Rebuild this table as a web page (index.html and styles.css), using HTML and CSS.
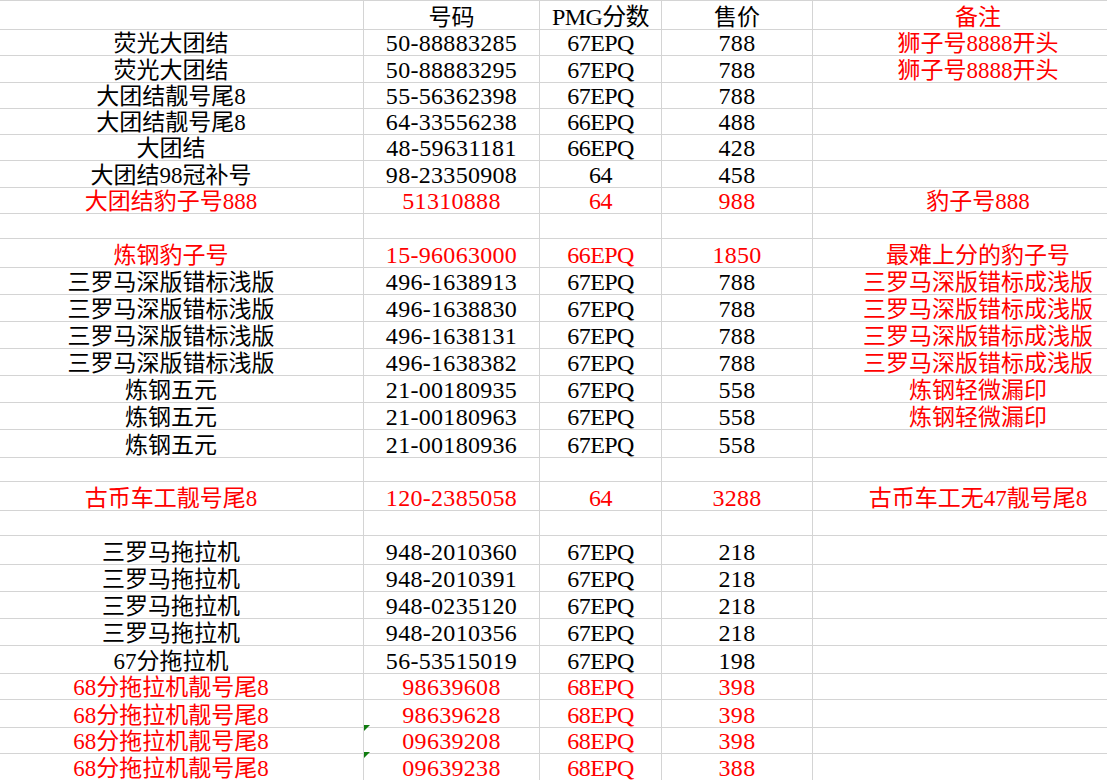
FILE: index.html
```html
<!DOCTYPE html>
<html lang="zh-CN">
<head>
<meta charset="utf-8">
<title>纸币报价表</title>
<link rel="stylesheet" href="styles.css">
</head>
<body>
<div class="sheet">
  <div class="row h26"><div class="cell c1"></div><div class="cell c2">号码</div><div class="cell c3 num">PMG分数</div><div class="cell c4">售价</div><div class="cell c5 red">备注</div></div>
  <div class="row"><div class="cell c1">荧光大团结</div><div class="cell c2 num">50-88883285</div><div class="cell c3 num">67EPQ</div><div class="cell c4 num">788</div><div class="cell c5 red">狮子号8888开头</div></div>
  <div class="row h26"><div class="cell c1">荧光大团结</div><div class="cell c2 num">50-88883295</div><div class="cell c3 num">67EPQ</div><div class="cell c4 num">788</div><div class="cell c5 red">狮子号8888开头</div></div>
  <div class="row h26"><div class="cell c1">大团结靓号尾8</div><div class="cell c2 num">55-56362398</div><div class="cell c3 num">67EPQ</div><div class="cell c4 num">788</div><div class="cell c5"></div></div>
  <div class="row h26"><div class="cell c1">大团结靓号尾8</div><div class="cell c2 num">64-33556238</div><div class="cell c3 num">66EPQ</div><div class="cell c4 num">488</div><div class="cell c5"></div></div>
  <div class="row"><div class="cell c1">大团结</div><div class="cell c2 num">48-59631181</div><div class="cell c3 num">66EPQ</div><div class="cell c4 num">428</div><div class="cell c5"></div></div>
  <div class="row h26"><div class="cell c1">大团结98冠补号</div><div class="cell c2 num">98-23350908</div><div class="cell c3 num">64</div><div class="cell c4 num">458</div><div class="cell c5"></div></div>
  <div class="row red"><div class="cell c1">大团结豹子号888</div><div class="cell c2 num">51310888</div><div class="cell c3 num">64</div><div class="cell c4 num">988</div><div class="cell c5">豹子号888</div></div>
  <div class="row"><div class="cell c1"></div><div class="cell c2"></div><div class="cell c3"></div><div class="cell c4"></div><div class="cell c5"></div></div>
  <div class="row red"><div class="cell c1">炼钢豹子号</div><div class="cell c2 num">15-96063000</div><div class="cell c3 num">66EPQ</div><div class="cell c4 num">1850</div><div class="cell c5">最难上分的豹子号</div></div>
  <div class="row"><div class="cell c1">三罗马深版错标浅版</div><div class="cell c2 num">496-1638913</div><div class="cell c3 num">67EPQ</div><div class="cell c4 num">788</div><div class="cell c5 red">三罗马深版错标成浅版</div></div>
  <div class="row"><div class="cell c1">三罗马深版错标浅版</div><div class="cell c2 num">496-1638830</div><div class="cell c3 num">67EPQ</div><div class="cell c4 num">788</div><div class="cell c5 red">三罗马深版错标成浅版</div></div>
  <div class="row"><div class="cell c1">三罗马深版错标浅版</div><div class="cell c2 num">496-1638131</div><div class="cell c3 num">67EPQ</div><div class="cell c4 num">788</div><div class="cell c5 red">三罗马深版错标成浅版</div></div>
  <div class="row"><div class="cell c1">三罗马深版错标浅版</div><div class="cell c2 num">496-1638382</div><div class="cell c3 num">67EPQ</div><div class="cell c4 num">788</div><div class="cell c5 red">三罗马深版错标成浅版</div></div>
  <div class="row"><div class="cell c1">炼钢五元</div><div class="cell c2 num">21-00180935</div><div class="cell c3 num">67EPQ</div><div class="cell c4 num">558</div><div class="cell c5 red">炼钢轻微漏印</div></div>
  <div class="row h28"><div class="cell c1">炼钢五元</div><div class="cell c2 num">21-00180963</div><div class="cell c3 num">67EPQ</div><div class="cell c4 num">558</div><div class="cell c5 red">炼钢轻微漏印</div></div>
  <div class="row h26"><div class="cell c1">炼钢五元</div><div class="cell c2 num">21-00180936</div><div class="cell c3 num">67EPQ</div><div class="cell c4 num">558</div><div class="cell c5"></div></div>
  <div class="row"><div class="cell c1"></div><div class="cell c2"></div><div class="cell c3"></div><div class="cell c4"></div><div class="cell c5"></div></div>
  <div class="row red"><div class="cell c1">古币车工靓号尾8</div><div class="cell c2 num">120-2385058</div><div class="cell c3 num">64</div><div class="cell c4 num">3288</div><div class="cell c5">古币车工无47靓号尾8</div></div>
  <div class="row"><div class="cell c1"></div><div class="cell c2"></div><div class="cell c3"></div><div class="cell c4"></div><div class="cell c5"></div></div>
  <div class="row"><div class="cell c1">三罗马拖拉机</div><div class="cell c2 num">948-2010360</div><div class="cell c3 num">67EPQ</div><div class="cell c4 num">218</div><div class="cell c5"></div></div>
  <div class="row"><div class="cell c1">三罗马拖拉机</div><div class="cell c2 num">948-2010391</div><div class="cell c3 num">67EPQ</div><div class="cell c4 num">218</div><div class="cell c5"></div></div>
  <div class="row"><div class="cell c1">三罗马拖拉机</div><div class="cell c2 num">948-0235120</div><div class="cell c3 num">67EPQ</div><div class="cell c4 num">218</div><div class="cell c5"></div></div>
  <div class="row h28"><div class="cell c1">三罗马拖拉机</div><div class="cell c2 num">948-2010356</div><div class="cell c3 num">67EPQ</div><div class="cell c4 num">218</div><div class="cell c5"></div></div>
  <div class="row h26"><div class="cell c1">67分拖拉机</div><div class="cell c2 num">56-53515019</div><div class="cell c3 num">67EPQ</div><div class="cell c4 num">198</div><div class="cell c5"></div></div>
  <div class="row red h28"><div class="cell c1">68分拖拉机靓号尾8</div><div class="cell c2 num">98639608</div><div class="cell c3 num">68EPQ</div><div class="cell c4 num">398</div><div class="cell c5"></div></div>
  <div class="row red h26"><div class="cell c1">68分拖拉机靓号尾8</div><div class="cell c2 num">98639628</div><div class="cell c3 num">68EPQ</div><div class="cell c4 num">398</div><div class="cell c5"></div></div>
  <div class="row red"><div class="cell c1">68分拖拉机靓号尾8</div><div class="cell c2 num flag">09639208</div><div class="cell c3 num">68EPQ</div><div class="cell c4 num">398</div><div class="cell c5"></div></div>
  <div class="row red"><div class="cell c1">68分拖拉机靓号尾8</div><div class="cell c2 num flag">09639238</div><div class="cell c3 num">68EPQ</div><div class="cell c4 num">388</div><div class="cell c5"></div></div>
</div>
</body>
</html>
```

FILE: styles.css
```css
html, body {
  margin: 0;
  padding: 0;
  background: #ffffff;
  overflow: hidden;
}

body {
  width: 1107px;
  height: 780px;
  font-family: "Liberation Serif", "Noto Sans CJK SC", serif;
  font-size: 23px;
  color: #000000;
}

.sheet {
  width: 1143px;
  border-top: 1px solid #d4d4d4;
}

.row {
  display: grid;
  grid-template-columns: 364px 176px 122px 151px 330px;
  height: 27px;
  box-sizing: border-box;
}

.row.h26 { height: 26px; }
.row.h28 { height: 28px; }

.cell {
  position: relative;
  box-sizing: border-box;
  border-bottom: 1px solid #d4d4d4;
  border-right: 1px solid #d4d4d4;
  display: flex;
  align-items: center;
  justify-content: center;
  padding-top: 4px;
  white-space: nowrap;
  line-height: 1;
  overflow: visible;
}

.c1 { padding-right: 21px; }
.c5 { border-right: none; }

.num {
  font-size: 24px;
  letter-spacing: 0.3px;
}

.c3.num { letter-spacing: -0.6px; }

.red { color: #ff0000; }

.flag::before {
  content: "";
  position: absolute;
  left: 0;
  top: 0;
  width: 0;
  height: 0;
  border-top: 6px solid #107c10;
  border-right: 6px solid transparent;
}
```
